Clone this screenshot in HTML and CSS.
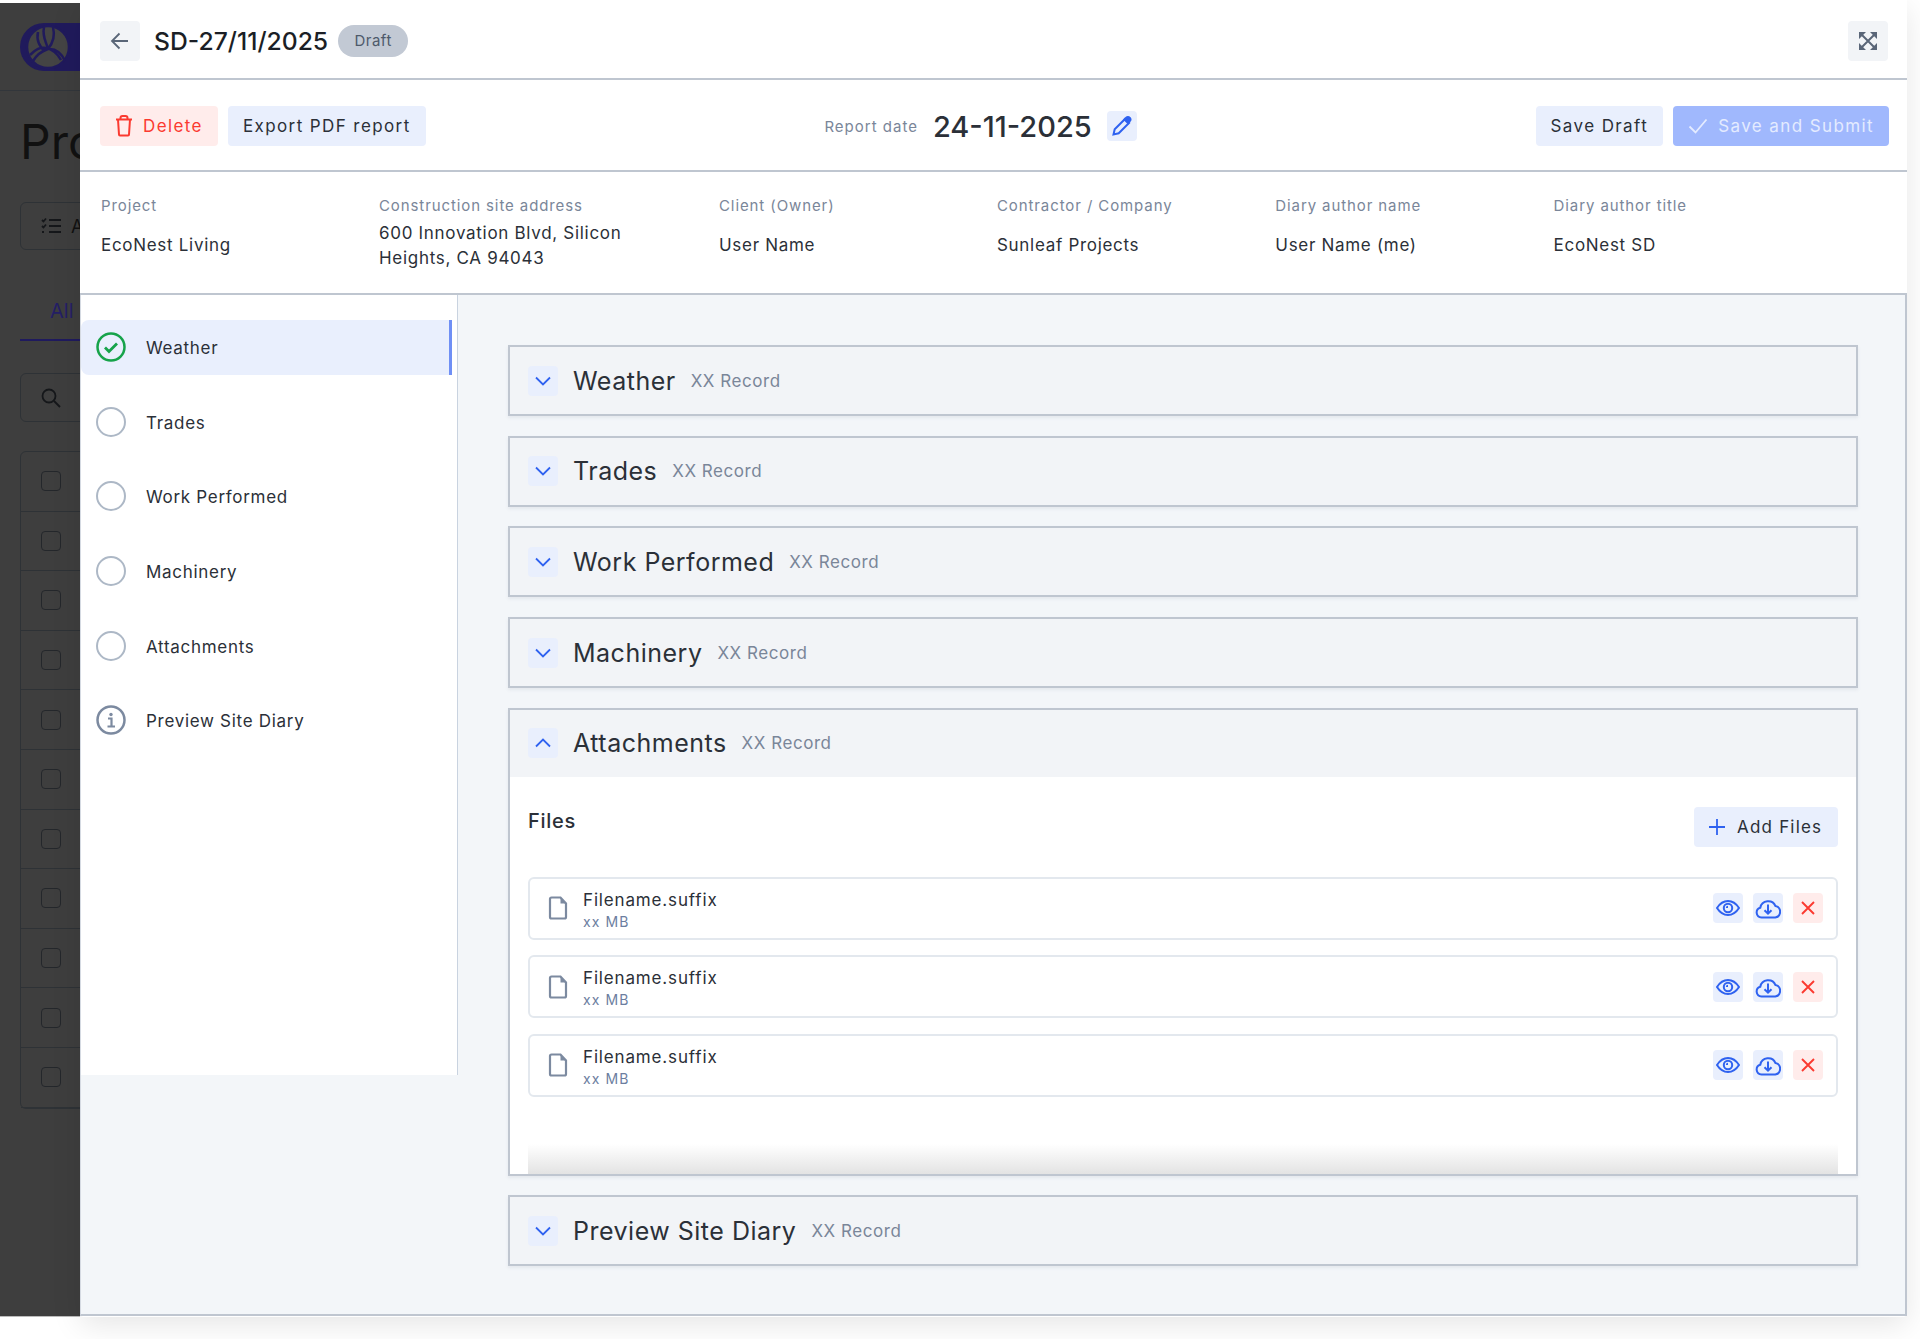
FILE: index.html
```html
<!DOCTYPE html>
<html lang="en">
<head>
  <meta charset="UTF-8">
  <meta name="viewport" content="width=device-width, initial-scale=1.0">
  <title>Site Diary</title>
  <link rel="stylesheet" href="styles.css">
</head>
<body>
  <svg class="icon-defs" xmlns="http://www.w3.org/2000/svg">
    <symbol id="i-down" viewBox="0 0 20 20"><path d="M3 6.500l7 7 7-7" fill="none" stroke="currentColor" stroke-width="1.800"/></symbol>
    <symbol id="i-up" viewBox="0 0 20 20"><path d="M3 13.500l7-7 7 7" fill="none" stroke="currentColor" stroke-width="1.800"/></symbol>
    <symbol id="i-file" viewBox="0 0 20 24"><path d="M3.500 1.500h9l5.500 6v13.500a1.500 1.500 0 0 1-1.500 1.500h-13a1.500 1.500 0 0 1-1.500-1.500v-18a1.500 1.500 0 0 1 1.500-1.500z" fill="none" stroke="currentColor" stroke-width="2.200"/><path d="M12.500 1.500l5.500 6h-5.500z" fill="currentColor"/></symbol>
    <symbol id="i-eye" viewBox="0 0 24 24"><path d="M1 12c3-4.700 6.700-7 11-7s8 2.300 11 7c-3 4.700-6.700 7-11 7s-8-2.300-11-7z" fill="none" stroke="currentColor" stroke-width="2"/><circle cx="12" cy="12" r="4.200" fill="none" stroke="currentColor" stroke-width="2"/><path d="M12 9.800a2.200 2.200 0 0 0-2.200 2.200h2.200z" fill="currentColor"/></symbol>
    <symbol id="i-cloud" viewBox="0 0 26 22"><path d="M6.500 20.500a5 5 0 0 1-1.200-9.800 8 8 0 0 1 15.200-1.600 5.800 5.800 0 0 1-.2 11.400z" fill="none" stroke="currentColor" stroke-width="2"/><path d="M13 7.500v9M9.500 13.200l3.500 3.500 3.500-3.500" fill="none" stroke="currentColor" stroke-width="2"/></symbol>
    <symbol id="i-close" viewBox="0 0 16 16"><path d="M2 2l12 12M14 2l-12 12" fill="none" stroke="currentColor" stroke-width="1.900"/></symbol>
  </svg>

  <div class="layout">
    <div class="behind">
      <div class="behind-top">
        <div class="behind-logo">
          <svg width="48" height="48" viewBox="0 0 48 48" fill="#444" stroke="#201a5c" stroke-width="2.500"><circle cx="24" cy="24" r="21"/><path fill="none" d="M20 4c-2 10 2 14 4 22-6 2-12 7-15 12M29 4c2 8 0 16-5 22 8-1 14 5 17 12M14 9c-2 9 2 14 6 19M6 32c6-6 10-8 16-7 6 1 12 6 15 12"/></svg>
        </div>
      </div>
      <div class="behind-title">Projects</div>
      <div class="behind-btn">
        <svg width="20" height="18" viewBox="0 0 20 18" fill="none" stroke="#15171a" stroke-width="1.800"><path d="M8 3h12M8 9h12M8 15h12M1 3l1.500 1.500L5 1.500M1 9l1.500 1.500L5 7.500M1 15h2"/></svg>
        <span>All filters</span>
      </div>
      <div class="behind-tab">All</div>
      <div class="behind-search">
        <svg width="20" height="20" viewBox="0 0 20 20" fill="none" stroke="#15171a" stroke-width="1.800"><circle cx="8" cy="8" r="6.500"/><path d="M13 13l6 6"/></svg>
      </div>
      <div class="behind-table">
        <div class="behind-row"><span class="behind-check"></span></div>
        <div class="behind-row"><span class="behind-check"></span></div>
        <div class="behind-row"><span class="behind-check"></span></div>
        <div class="behind-row"><span class="behind-check"></span></div>
        <div class="behind-row"><span class="behind-check"></span></div>
        <div class="behind-row"><span class="behind-check"></span></div>
        <div class="behind-row"><span class="behind-check"></span></div>
        <div class="behind-row"><span class="behind-check"></span></div>
        <div class="behind-row"><span class="behind-check"></span></div>
        <div class="behind-row"><span class="behind-check"></span></div>
        <div class="behind-row"><span class="behind-check"></span></div>
      </div>
    </div>

    <div class="drawer">
      <header class="drawer-header">
        <div class="header-left">
          <button class="icon-btn">
            <svg width="20" height="20" viewBox="0 0 20 20" fill="none" stroke="currentColor" stroke-width="1.800"><path d="M18 10H2M9.500 2.500L2 10l7.500 7.500"/></svg>
          </button>
          <h1 class="diary-title">SD-27/11/2025</h1>
          <span class="badge">Draft</span>
        </div>
        <button class="icon-btn">
          <svg width="20" height="20" viewBox="0 0 20 20" fill="none" stroke="currentColor" stroke-width="2"><path d="M2.500 2.500l15 15M17.500 2.500l-15 15"/><path d="M1 1h7L1 8zM19 1v7l-7-7zM19 19h-7l7-7zM1 19v-7l7 7z" fill="currentColor" stroke="none"/></svg>
        </button>
      </header>

      <div class="toolbar">
        <div class="btn-group">
          <button class="btn btn-danger">
            <svg width="18" height="22" viewBox="0 0 18 22" fill="none" stroke="currentColor" stroke-width="2"><path d="M1 4.500h16M5.500 4.500V3a2 2 0 0 1 2-2h3a2 2 0 0 1 2 2v1.500M3 4.500l1 15a1 1 0 0 0 1 1h8a1 1 0 0 0 1-1l1-15"/></svg>
            Delete
          </button>
          <button class="btn btn-soft">Export PDF report</button>
        </div>
        <div class="report-date">
          <span class="report-date-label">Report date</span>
          <span class="report-date-value">24-11-2025</span>
          <button class="mini-btn">
            <svg width="20" height="20" viewBox="0 0 20 20" fill="none" stroke="currentColor" stroke-width="2"><path d="M1.500 18.500l1.200-5.200L13 3l4 4L6.700 17.300z"/><path d="M12.500 3.500l1.700-1.700c1-1 2.600-1 3.500 0 .9.900.9 2.400 0 3.400L16 7z" fill="currentColor"/></svg>
          </button>
        </div>
        <div class="btn-group">
          <button class="btn btn-soft">Save Draft</button>
          <button class="btn btn-primary">
            <svg width="20" height="16" viewBox="0 0 20 16" fill="none" stroke="currentColor" stroke-width="1.800"><path d="M1.500 8.500l6 6L18.500 1.500"/></svg>
            Save and Submit
          </button>
        </div>
      </div>

      <div class="info-row">
        <div class="info-col"><p class="info-label">Project</p><p class="info-value">EcoNest Living</p></div>
        <div class="info-col info-col-wide"><p class="info-label">Construction site address</p><p class="info-value info-address">600 Innovation Blvd, Silicon Heights, CA 94043</p></div>
        <div class="info-col"><p class="info-label">Client (Owner)</p><p class="info-value">User Name</p></div>
        <div class="info-col"><p class="info-label">Contractor / Company</p><p class="info-value">Sunleaf Projects</p></div>
        <div class="info-col"><p class="info-label">Diary author name</p><p class="info-value">User Name (me)</p></div>
        <div class="info-col"><p class="info-label">Diary author title</p><p class="info-value">EcoNest SD</p></div>
      </div>

      <div class="content">
        <nav class="steps">
          <div class="step active">
            <svg class="step-icon" width="30" height="30" viewBox="0 0 30 30" fill="none"><circle cx="15" cy="15" r="13.500" stroke="#16a34a" stroke-width="2.500"/><path d="M9 15.500l4 4 8-8" stroke="#16a34a" stroke-width="2.800"/></svg>
            <span>Weather</span>
          </div>
          <div class="step"><span class="step-circle"></span><span>Trades</span></div>
          <div class="step"><span class="step-circle"></span><span>Work Performed</span></div>
          <div class="step"><span class="step-circle"></span><span>Machinery</span></div>
          <div class="step"><span class="step-circle"></span><span>Attachments</span></div>
          <div class="step">
            <svg class="step-icon" width="30" height="30" viewBox="0 0 30 30" fill="none"><circle cx="15" cy="15" r="13.500" stroke="#7c8aa0" stroke-width="2.500"/><circle cx="15" cy="9.500" r="1.700" fill="#7c8aa0"/><path d="M12 13.500h3.500v8M11.500 21.500h7.500" stroke="#7c8aa0" stroke-width="2.200"/></svg>
            <span>Preview Site Diary</span>
          </div>
        </nav>

        <main class="sections">
          <section class="section">
            <div class="section-head">
              <button class="mini-btn"><svg width="20" height="20"><use href="#i-down"/></svg></button>
              <h2 class="section-title">Weather</h2><span class="section-count">XX Record</span>
            </div>
          </section>
          <section class="section">
            <div class="section-head">
              <button class="mini-btn"><svg width="20" height="20"><use href="#i-down"/></svg></button>
              <h2 class="section-title">Trades</h2><span class="section-count">XX Record</span>
            </div>
          </section>
          <section class="section">
            <div class="section-head">
              <button class="mini-btn"><svg width="20" height="20"><use href="#i-down"/></svg></button>
              <h2 class="section-title">Work Performed</h2><span class="section-count">XX Record</span>
            </div>
          </section>
          <section class="section">
            <div class="section-head">
              <button class="mini-btn"><svg width="20" height="20"><use href="#i-down"/></svg></button>
              <h2 class="section-title">Machinery</h2><span class="section-count">XX Record</span>
            </div>
          </section>
          <section class="section section-open">
            <div class="section-head">
              <button class="mini-btn"><svg width="20" height="20"><use href="#i-up"/></svg></button>
              <h2 class="section-title">Attachments</h2><span class="section-count">XX Record</span>
            </div>
            <div class="section-body">
              <div class="files-head">
                <h3 class="files-title">Files</h3>
                <button class="btn btn-soft btn-add">
                  <svg width="18" height="18" viewBox="0 0 18 18" fill="none" stroke="#2f62f0" stroke-width="1.800"><path d="M9 1v16M1 9h16"/></svg>
                  Add Files
                </button>
              </div>
              <div class="file-row">
                <svg class="file-icon" width="20" height="24"><use href="#i-file"/></svg>
                <div class="file-text"><p class="file-name">Filename.suffix</p><p class="file-size">xx MB</p></div>
                <div class="file-actions">
                  <button class="mini-btn"><svg width="24" height="24"><use href="#i-eye"/></svg></button>
                  <button class="mini-btn"><svg width="26" height="22"><use href="#i-cloud"/></svg></button>
                  <button class="mini-btn mini-danger"><svg width="16" height="16"><use href="#i-close"/></svg></button>
                </div>
              </div>
              <div class="file-row">
                <svg class="file-icon" width="20" height="24"><use href="#i-file"/></svg>
                <div class="file-text"><p class="file-name">Filename.suffix</p><p class="file-size">xx MB</p></div>
                <div class="file-actions">
                  <button class="mini-btn"><svg width="24" height="24"><use href="#i-eye"/></svg></button>
                  <button class="mini-btn"><svg width="26" height="22"><use href="#i-cloud"/></svg></button>
                  <button class="mini-btn mini-danger"><svg width="16" height="16"><use href="#i-close"/></svg></button>
                </div>
              </div>
              <div class="file-row">
                <svg class="file-icon" width="20" height="24"><use href="#i-file"/></svg>
                <div class="file-text"><p class="file-name">Filename.suffix</p><p class="file-size">xx MB</p></div>
                <div class="file-actions">
                  <button class="mini-btn"><svg width="24" height="24"><use href="#i-eye"/></svg></button>
                  <button class="mini-btn"><svg width="26" height="22"><use href="#i-cloud"/></svg></button>
                  <button class="mini-btn mini-danger"><svg width="16" height="16"><use href="#i-close"/></svg></button>
                </div>
              </div>
              <div class="files-fade"></div>
            </div>
          </section>
          <section class="section">
            <div class="section-head">
              <button class="mini-btn"><svg width="20" height="20"><use href="#i-down"/></svg></button>
              <h2 class="section-title">Preview Site Diary</h2><span class="section-count">XX Record</span>
            </div>
          </section>
        </main>
      </div>
    </div>
  </div>
</body>
</html>
```

FILE: styles.css
```css
* {
  box-sizing: border-box;
}

body {
  margin: 0;
  background-color: #fff;
  font-family: 'Inter', 'Liberation Sans', sans-serif;
  color: #2b3038;
}

p, h1, h2, h3 {
  margin: 0;
  font-weight: 400;
}

button {
  font-family: inherit;
  border: none;
  cursor: pointer;
}

.icon-defs {
  display: none;
}

.layout {
  display: flex;
  height: 1339px;
  align-items: flex-start;
}

/* page dimmed behind the drawer */
.behind {
  flex: 0 0 80px;
  height: 1314px;
  margin-top: 3px;
  padding-left: 20px;
  overflow: hidden;
  background-color: #3e3e3e;
  border-bottom: 1px solid #bbb;
}

.behind-top {
  width: 400px;
  height: 88px;
  margin-left: -20px;
  padding: 20px 0 0 20px;
  border-bottom: 1px solid #32363b;
}

.behind-logo {
  display: flex;
  align-items: center;
  width: 120px;
  height: 48px;
  padding-left: 4px;
  border-radius: 24px 0 0 24px;
  background-color: #201a5c;
}

.behind-title {
  width: 300px;
  margin-top: 22px;
  font-size: 48px;
  line-height: 58px;
  color: #111;
}

.behind-btn {
  display: flex;
  align-items: center;
  gap: 10px;
  width: 240px;
  height: 48px;
  margin-top: 31px;
  padding-left: 20px;
  border: 1px solid #2e3236;
  border-radius: 6px;
  font-size: 18px;
  color: #111;
  white-space: nowrap;
}

.behind-tab {
  width: 200px;
  height: 40px;
  margin-top: 51px;
  padding-left: 30px;
  border-bottom: 2px solid #1f1a5e;
  font-size: 20px;
  line-height: 20px;
  color: #241f66;
}

.behind-search {
  display: flex;
  align-items: center;
  width: 240px;
  height: 49px;
  margin-top: 32px;
  padding-left: 20px;
  border: 1px solid #2e3236;
  border-radius: 6px;
}

.behind-table {
  width: 300px;
  margin-top: 29px;
  border: 1px solid #2e3236;
  border-radius: 6px;
}

.behind-row {
  display: flex;
  align-items: center;
  height: 59.6px;
  padding-left: 20px;
  border-bottom: 1px solid #2e3236;
}

.behind-check {
  width: 20px;
  height: 20px;
  border: 1.5px solid #24272b;
  border-radius: 4px;
}

/* drawer */
.drawer {
  flex: 0 0 1827px;
  height: 1317px;
  background-color: #fff;
  border-radius: 0 0 4px 4px;
  box-shadow: 0 8px 30px rgba(0, 0, 0, 0.1);
}

.drawer-header {
  display: flex;
  align-items: center;
  justify-content: space-between;
  height: 80px;
  padding: 3px 19px 0 20px;
  border-bottom: 2px solid #bfc6d0;
}

.header-left {
  display: flex;
  align-items: center;
}

.icon-btn {
  display: flex;
  align-items: center;
  justify-content: center;
  width: 40px;
  height: 40px;
  padding: 0;
  border-radius: 4px;
  background-color: #f2f4f7;
  color: #5a6678;
}

.diary-title {
  margin-left: 14px;
  font-size: 24.7px;
  font-weight: 500;
  color: #1b1f26;
}

.badge {
  display: flex;
  align-items: center;
  justify-content: center;
  width: 70px;
  height: 32px;
  margin-left: 10px;
  border-radius: 16px;
  background-color: #c2c9d4;
  font-size: 15px;
  letter-spacing: 0.5px;
  color: #4e5a6b;
}

.toolbar {
  display: flex;
  align-items: center;
  justify-content: space-between;
  height: 92px;
  padding: 2px 18px 0 20px;
  border-bottom: 2px solid #bfc6d0;
}

.btn-group {
  display: flex;
  gap: 10px;
}

.btn {
  display: flex;
  align-items: center;
  gap: 10px;
  height: 40px;
  padding: 0 15px;
  border-radius: 4px;
  font-size: 17px;
  letter-spacing: 1.4px;
  white-space: nowrap;
}

.btn-danger {
  background-color: #ffeceb;
  color: #fb3a30;
}

.btn-soft {
  background-color: #e9effd;
  color: #2b3038;
}

.btn-primary {
  background-color: #a0b8fd;
  color: #e4ebff;
}

.report-date {
  display: flex;
  align-items: center;
}

.report-date-label {
  font-size: 15px;
  letter-spacing: 1px;
  color: #7a8699;
}

.report-date-value {
  margin: 0 15px;
  font-size: 29px;
  font-weight: 500;
  color: #2b3038;
}

.mini-btn {
  display: flex;
  align-items: center;
  justify-content: center;
  flex: 0 0 30px;
  width: 30px;
  height: 30px;
  padding: 0;
  border-radius: 4px;
  background-color: #e9effd;
  color: #2f62f0;
}

.mini-danger {
  background-color: #ffeceb;
  color: #fb3a30;
}

.info-row {
  display: grid;
  grid-template-columns: 278px 340px 278px 278.3px 278.3px 1fr;
  height: 123px;
  padding: 25px 0 0 21px;
  border-bottom: 2px solid #bfc6d0;
}

.info-label {
  font-size: 15px;
  line-height: 18px;
  letter-spacing: 0.9px;
  color: #7a8699;
}

.info-value {
  margin-top: 17.5px;
  font-size: 17px;
  line-height: 25px;
  letter-spacing: 0.7px;
  color: #2b3038;
}

.info-address {
  max-width: 280px;
  margin-top: 6px;
}

.content {
  display: flex;
  align-items: flex-start;
  height: 1021px;
  background-color: #f3f6f9;
  border-right: 2px solid #bfc6d0;
  border-bottom: 2px solid #bfc6d0;
  border-left: 1px solid #d5dae2;
}

.steps {
  display: flex;
  flex-direction: column;
  gap: 20px;
  flex: 0 0 377px;
  height: 780px;
  padding: 25px 5px 0 0;
  background-color: #fff;
  border-right: 1px solid #c9d3e0;
}

.step {
  display: flex;
  align-items: center;
  gap: 20px;
  height: 54.6px;
  padding-left: 15px;
  font-size: 17px;
  letter-spacing: 0.7px;
  color: #2b3038;
}

.step span:last-child {
  padding-top: 2px;
}

.step.active {
  background-color: #e9effd;
  border-right: 3px solid #6f8ff5;
  border-radius: 8px 0 0 8px;
}

.step-icon {
  flex: none;
}

.step-circle {
  flex: none;
  width: 30px;
  height: 30px;
  border: 2.5px solid #adb8c6;
  border-radius: 50%;
}

.sections {
  display: flex;
  flex-direction: column;
  gap: 19.7px;
  flex: 1;
  padding: 50px 47px 0 50px;
}

.section {
  border: 2px solid #bfc6d0;
  background-color: #f2f4f7;
  box-shadow: 0 2px 3px rgba(120, 135, 155, 0.12);
}

.section-head {
  display: flex;
  align-items: center;
  height: 67px;
  padding-left: 18px;
}

.section-title {
  margin-left: 15px;
  font-size: 25px;
  letter-spacing: 0.5px;
  color: #2b3038;
}

.section-count {
  margin-left: 15px;
  font-size: 17px;
  letter-spacing: 0.55px;
  color: #7a8699;
}

.section-body {
  position: relative;
  height: 397px;
  padding: 0 18px;
  background-color: #fff;
}

.files-head {
  display: flex;
  align-items: flex-start;
  justify-content: space-between;
  height: 100px;
}

.files-title {
  padding-top: 32px;
  font-size: 20px;
  line-height: 24px;
  font-weight: 500;
  letter-spacing: 0.7px;
}

.btn-add {
  width: 144px;
  margin-top: 30px;
  padding: 0 14px;
  gap: 11px;
  letter-spacing: 1.2px;
}

.file-row {
  display: flex;
  align-items: center;
  height: 63px;
  margin-bottom: 15.4px;
  padding: 0 13px 0 18px;
  border: 2px solid #e3e8ee;
  border-radius: 6px;
}

.file-icon {
  flex: none;
  color: #7c8aa0;
}

.file-text {
  flex: 1;
  margin-left: 15px;
  padding-top: 4px;
}

.file-name {
  font-size: 17px;
  line-height: 20px;
  letter-spacing: 0.85px;
}

.file-size {
  margin-top: 3px;
  font-size: 14px;
  line-height: 18px;
  letter-spacing: 1.1px;
  color: #6c7ea0;
}

.file-actions {
  display: flex;
  gap: 10px;
}

/* scroll fade on the bottom of the file list */
.files-fade {
  position: absolute;
  left: 18px;
  right: 18px;
  bottom: 0;
  height: 30px;
  background: linear-gradient(to bottom, rgba(227, 227, 227, 0), #e3e3e3);
}
```
